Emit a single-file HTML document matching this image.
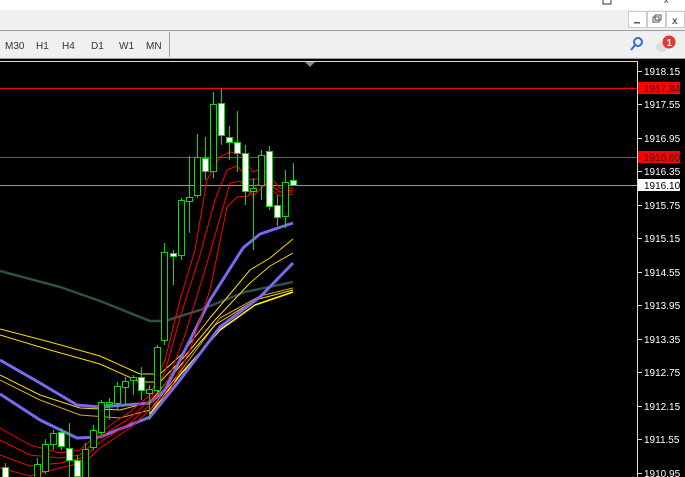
<!DOCTYPE html><html><head><style>
body{margin:0;width:685px;height:477px;overflow:hidden;background:#000;font-family:"Liberation Sans",sans-serif}
</style></head><body>
<svg width="685" height="477" xmlns="http://www.w3.org/2000/svg" style="position:absolute;left:0;top:0">
<rect x="0" y="0" width="685" height="10" fill="#fff"/>
<rect x="603" y="-3" width="8" height="7" fill="none" stroke="#333"/>
<text x="664" y="3" font-size="9" fill="#333">x</text>
<rect x="0" y="10" width="685" height="20" fill="#f0f0f0"/>
<g fill="#fff" stroke="#ccc"><rect x="628.5" y="11.5" width="18" height="16"/><rect x="647.5" y="11.5" width="18" height="16"/><rect x="666.5" y="11.5" width="18" height="16"/></g>
<rect x="634" y="22" width="6" height="1.5" fill="#555"/>
<rect x="653" y="17" width="6" height="5" fill="none" stroke="#555"/><rect x="655" y="15" width="6" height="5" fill="none" stroke="#555"/>
<text x="672" y="24" font-size="10" fill="#555" font-weight="bold">x</text>
<rect x="0" y="30" width="685" height="1" fill="#a0a0a0"/>
<rect x="0" y="31" width="685" height="28" fill="#f0f0f0"/>
<rect x="169" y="32" width="1" height="25" fill="#a0a0a0"/>
<g font-size="10" fill="#333"><text x="5" y="49">M30</text><text x="36" y="49">H1</text><text x="62" y="49">H4</text><text x="91" y="49">D1</text><text x="119" y="49">W1</text><text x="146" y="49">MN</text></g>
<circle cx="638" cy="42" r="4" fill="none" stroke="#2a6fd6" stroke-width="2"/><line x1="635" y1="45" x2="631" y2="50" stroke="#2a6fd6" stroke-width="2"/>
<ellipse cx="662" cy="47" rx="6" ry="5" fill="#ddd"/>
<circle cx="669" cy="42" r="6.5" fill="#e23b2a"/><text x="666.5" y="46" font-size="10" fill="#fff" font-weight="bold">1</text>
<rect x="0" y="58" width="685" height="1" fill="#999"/>
<rect x="0" y="59" width="685" height="418" fill="#000"/>
<line x1="0" y1="61.5" x2="637" y2="61.5" stroke="#ddd"/>
<line x1="637.5" y1="61" x2="637.5" y2="477" stroke="#ddd"/>
<polygon points="305,62 315,62 310,67" fill="#889"/>
<line x1="0" y1="88.5" x2="637" y2="88.5" stroke="#f00"/>
<line x1="0" y1="157.5" x2="637" y2="157.5" stroke="#b33" />
<line x1="0" y1="185.5" x2="637" y2="185.5" stroke="#999"/>
<g fill="none" stroke-linejoin="round">
<polyline stroke="#2f4f4f" stroke-width="2.5" points="0,271 60,287 100,301 150,321 165,321 200,310 245,292 293,282"/>
<polyline stroke="#ffd700" stroke-width="1" points="0,329 50,342 100,356 140,374 160,374 180,356 210,318 250,270 270,258 293,239"/>
<polyline stroke="#ffd700" stroke-width="1" points="0,335 50,350 100,364 140,382 160,382 185,356 215,320 250,283 270,266 293,253"/>
<polyline stroke="#daa520" stroke-width="1" points="0,380 40,400 80,415 120,418 150,410 180,372 220,318 260,296 293,288"/>
<polyline stroke="#ffd700" stroke-width="1" points="0,375 40,395 80,408 120,410 150,402 180,366 215,325 255,300 293,290"/>
<polyline stroke="#ffff00" stroke-width="1.5" points="150,414 180,375 220,330 255,305 293,292"/>
<polyline stroke="#7b68ee" stroke-width="3" points="0,360 40,383 77,405 100,407 150,403 165,390 180,360 210,300 243,248 260,234 293,223"/>
<polyline stroke="#7b68ee" stroke-width="3" points="0,394 40,420 77,438 100,437 150,417 180,380 220,327 260,297 293,263"/>
<polyline stroke="#f00" stroke-width="1" points="0,428 30,445 60,453 80,450 100,432 130,412 150,395 165,360 180,300 195,250 207,180 220,157 230,152 240,153 253,172 262,168 280,188 293,188"/>
<polyline stroke="#f00" stroke-width="1" points="0,440 30,455 60,458 80,455 100,437 130,418 150,400 165,372 180,318 200,255 215,200 227,170 237,166 250,180 262,178 280,192 293,190"/>
<polyline stroke="#f00" stroke-width="1" points="0,455 30,466 60,463 85,457 100,442 130,423 150,405 168,380 185,335 205,270 220,218 230,183 240,181 253,196 267,183 280,192 293,192"/>
<polyline stroke="#f00" stroke-width="1" points="0,468 30,476 60,468 85,462 100,448 130,428 150,410 170,390 190,350 210,290 227,207 237,197 248,196 260,182 280,196 293,194"/>
</g>
<g stroke="#00e000" stroke-width="1">
<line x1="5.5" y1="463" x2="5.5" y2="477"/><line x1="37.5" y1="458" x2="37.5" y2="477"/><line x1="45.5" y1="439" x2="45.5" y2="474"/><line x1="53.5" y1="430" x2="53.5" y2="450"/><line x1="61.5" y1="428" x2="61.5" y2="450"/><line x1="69.5" y1="423" x2="69.5" y2="477"/><line x1="77.5" y1="455" x2="77.5" y2="477"/><line x1="85.5" y1="443" x2="85.5" y2="477"/><line x1="93.5" y1="425" x2="93.5" y2="450"/><line x1="101.5" y1="400" x2="101.5" y2="435"/><line x1="109.5" y1="398" x2="109.5" y2="420"/><line x1="117.5" y1="382" x2="117.5" y2="410"/><line x1="125.5" y1="377" x2="125.5" y2="405"/><line x1="133.5" y1="375" x2="133.5" y2="395"/><line x1="141.5" y1="367" x2="141.5" y2="400"/><line x1="149.5" y1="385" x2="149.5" y2="420"/><line x1="157.5" y1="345" x2="157.5" y2="392"/><line x1="164.5" y1="243" x2="164.5" y2="345"/><line x1="173.5" y1="250" x2="173.5" y2="285"/><line x1="181.5" y1="198" x2="181.5" y2="260"/><line x1="189.5" y1="156" x2="189.5" y2="233"/><line x1="197.5" y1="134" x2="197.5" y2="198"/><line x1="205.5" y1="137" x2="205.5" y2="180"/><line x1="213.5" y1="92" x2="213.5" y2="178"/><line x1="221.5" y1="89" x2="221.5" y2="145"/><line x1="229.5" y1="126" x2="229.5" y2="160"/><line x1="237.5" y1="111" x2="237.5" y2="172"/><line x1="245.5" y1="145" x2="245.5" y2="205"/><line x1="253.5" y1="178" x2="253.5" y2="250"/><line x1="261.5" y1="150" x2="261.5" y2="200"/><line x1="269.5" y1="146" x2="269.5" y2="210"/><line x1="277.5" y1="195" x2="277.5" y2="226"/><line x1="285.5" y1="170" x2="285.5" y2="228"/><line x1="293.5" y1="163" x2="293.5" y2="185"/>
</g>
<g stroke="#00e000" stroke-width="1">
<rect x="2.5" y="467.5" width="6" height="10" fill="#fff"/>
<rect x="34.5" y="464.5" width="6" height="13" fill="#000"/>
<rect x="42.5" y="444.5" width="6" height="27" fill="#000"/>
<rect x="50.5" y="433.5" width="6" height="11" fill="#000"/>
<rect x="58.5" y="432.5" width="6" height="14" fill="#fff"/>
<rect x="66.5" y="448.5" width="6" height="12" fill="#fff"/>
<rect x="74.5" y="460.5" width="6" height="16" fill="#fff"/>
<rect x="82.5" y="449.5" width="6" height="28" fill="#000"/>
<rect x="90.5" y="430.5" width="6" height="17" fill="#000"/>
<rect x="98.5" y="402.5" width="6" height="30" fill="#000"/>
<rect x="106.5" y="402.5" width="6" height="2" fill="#000"/>
<rect x="114.5" y="386.5" width="6" height="17" fill="#000"/>
<rect x="122.5" y="381.5" width="6" height="6" fill="#000"/>
<rect x="130.5" y="377.5" width="6" height="3" fill="#000"/>
<rect x="138.5" y="377.5" width="6" height="13" fill="#fff"/>
<rect x="146.5" y="389.5" width="6" height="4" fill="#000"/>
<rect x="154.5" y="347.5" width="6" height="43" fill="#000"/>
<rect x="161.5" y="252.5" width="6" height="88" fill="#000"/>
<rect x="170.5" y="253.5" width="6" height="3" fill="#fff"/>
<rect x="178.5" y="200.5" width="6" height="55" fill="#000"/>
<rect x="186.5" y="197.5" width="6" height="4" fill="#000"/>
<rect x="194.5" y="157.5" width="6" height="38" fill="#000"/>
<rect x="202.5" y="158.5" width="6" height="13" fill="#fff"/>
<rect x="210.5" y="104.5" width="6" height="67" fill="#000"/>
<rect x="218.5" y="103.5" width="6" height="32" fill="#fff"/>
<rect x="226.5" y="137.5" width="6" height="5" fill="#fff"/>
<rect x="234.5" y="142.5" width="6" height="11" fill="#fff"/>
<rect x="242.5" y="153.5" width="6" height="38" fill="#fff"/>
<rect x="250.5" y="188.5" width="6" height="3" fill="#000"/>
<rect x="258.5" y="155.5" width="6" height="30" fill="#000"/>
<rect x="266.5" y="151.5" width="6" height="55" fill="#fff"/>
<rect x="274.5" y="205.5" width="6" height="12" fill="#fff"/>
<rect x="282.5" y="182.5" width="6" height="34" fill="#000"/>
<rect x="290.5" y="180.5" width="6" height="5" fill="#fff"/>
</g>
<g stroke="#ddd"><line x1="638" y1="71.5" x2="642" y2="71.5"/><line x1="638" y1="104.5" x2="642" y2="104.5"/><line x1="638" y1="138.5" x2="642" y2="138.5"/><line x1="638" y1="171.5" x2="642" y2="171.5"/><line x1="638" y1="205.5" x2="642" y2="205.5"/><line x1="638" y1="238.5" x2="642" y2="238.5"/><line x1="638" y1="272.5" x2="642" y2="272.5"/><line x1="638" y1="305.5" x2="642" y2="305.5"/><line x1="638" y1="339.5" x2="642" y2="339.5"/><line x1="638" y1="372.5" x2="642" y2="372.5"/><line x1="638" y1="406.5" x2="642" y2="406.5"/><line x1="638" y1="439.5" x2="642" y2="439.5"/><line x1="638" y1="473.5" x2="642" y2="473.5"/></g>
<rect x="638" y="82" width="42" height="12" fill="#f00"/>
<rect x="638" y="151" width="42" height="12" fill="#f00"/>
<rect x="638" y="179" width="42" height="12" fill="#fff"/>
<g font-size="10" fill="#fff">
<text x="644" y="75">1918.15</text><text x="644" y="92" fill="#222">1917.84</text><text x="644" y="108">1917.55</text><text x="644" y="142">1916.95</text><text x="644" y="161" fill="#222">1916.60</text><text x="644" y="175">1916.35</text><text x="644" y="189" fill="#000">1916.10</text><text x="644" y="209">1915.75</text><text x="644" y="242">1915.15</text><text x="644" y="276">1914.55</text><text x="644" y="309">1913.95</text><text x="644" y="343">1913.35</text><text x="644" y="376">1912.75</text><text x="644" y="410">1912.15</text><text x="644" y="443">1911.55</text><text x="644" y="477">1910.95</text>
</g>
</svg>
</body></html>
